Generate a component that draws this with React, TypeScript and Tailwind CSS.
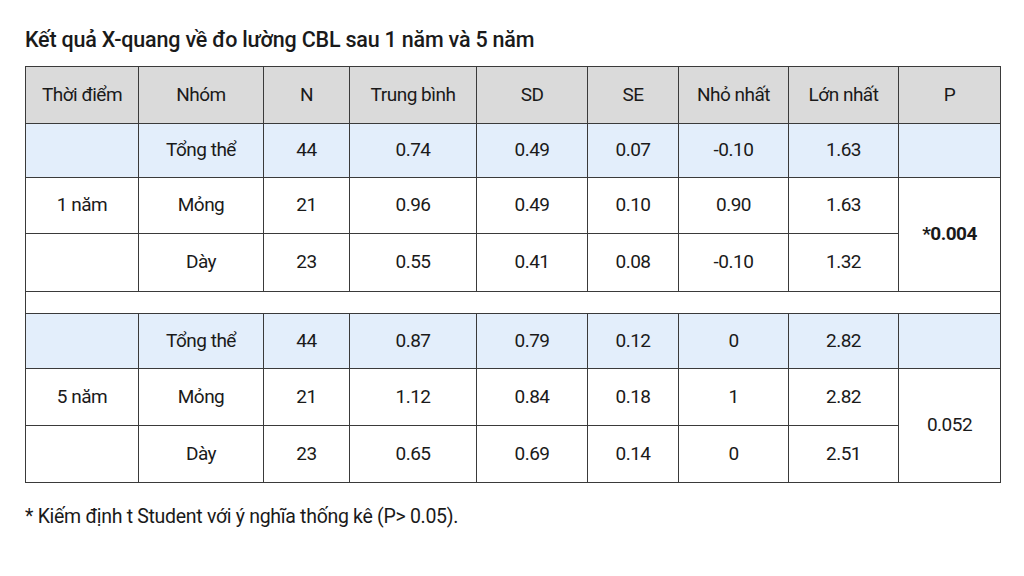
import React from "react";

const font = { fontFamily: "Roboto, 'Noto Sans', sans-serif" };

type Row = { g: string; n: string; N: string; tb: string; sd: string; se: string; min: string; max: string };

function DataRow({ r, blue, p }: { r: Row; blue?: boolean; p?: React.ReactNode }) {
  const bg = blue ? "bg-[#e3eefb]" : "bg-white";
  const td = `border border-[#3a3a3a] text-center ${bg}`;
  return (
    <>
      <td className={td}>{r.g}</td>
      <td className={td}>{r.n}</td>
      <td className={td}>{r.N}</td>
      <td className={td}>{r.tb}</td>
      <td className={td}>{r.sd}</td>
      <td className={td}>{r.se}</td>
      <td className={td}>{r.min}</td>
      <td className={td}>{r.max}</td>
      {p}
    </>
  );
}

export default function App() {
  const th = "border border-[#3a3a3a] bg-[#dadada] font-normal text-center";
  return (
    <div className="w-[1024px] h-[576px] bg-white text-[#1a1a1a] overflow-hidden" style={font}>
      <div className="pl-[25px] pt-[26px]">
        <h1 className="text-[21.5px] font-medium leading-[28px] tracking-[-0.2px]">
          Kết quả X-quang về đo lường CBL sau 1 năm và 5 năm
        </h1>
        <table className="mt-[12px] border-collapse text-[19px] tracking-[-0.5px] table-fixed w-[975px]">
          <colgroup>
            <col className="w-[113px]" />
            <col className="w-[125px]" />
            <col className="w-[86px]" />
            <col className="w-[127px]" />
            <col className="w-[111px]" />
            <col className="w-[91px]" />
            <col className="w-[110px]" />
            <col className="w-[110px]" />
            <col className="w-[102px]" />
          </colgroup>
          <thead>
            <tr className="h-[57px]">
              <th className={th}>Thời điểm</th>
              <th className={th}>Nhóm</th>
              <th className={th}>N</th>
              <th className={th}>Trung bình</th>
              <th className={th}>SD</th>
              <th className={th}>SE</th>
              <th className={th}>Nhỏ nhất</th>
              <th className={th}>Lớn nhất</th>
              <th className={th}>P</th>
            </tr>
          </thead>
          <tbody>
            <tr className="h-[54px]">
              <DataRow
                blue
                r={{ g: "", n: "Tổng thể", N: "44", tb: "0.74", sd: "0.49", se: "0.07", min: "-0.10", max: "1.63" }}
                p={<td className="border border-[#3a3a3a] bg-[#e3eefb]"></td>}
              />
            </tr>
            <tr className="h-[56px]">
              <DataRow
                r={{ g: "1 năm", n: "Mỏng", N: "21", tb: "0.96", sd: "0.49", se: "0.10", min: "0.90", max: "1.63" }}
                p={
                  <td rowSpan={2} className="border border-[#3a3a3a] bg-white text-center font-bold">
                    *0.004
                  </td>
                }
              />
            </tr>
            <tr className="h-[58px]">
              <DataRow r={{ g: "", n: "Dày", N: "23", tb: "0.55", sd: "0.41", se: "0.08", min: "-0.10", max: "1.32" }} />
            </tr>
            <tr className="h-[22px]">
              <td colSpan={9} className="border border-[#3a3a3a] bg-white"></td>
            </tr>
            <tr className="h-[55px]">
              <DataRow
                blue
                r={{ g: "", n: "Tổng thể", N: "44", tb: "0.87", sd: "0.79", se: "0.12", min: "0", max: "2.82" }}
                p={<td className="border border-[#3a3a3a] bg-[#e3eefb]"></td>}
              />
            </tr>
            <tr className="h-[57px]">
              <DataRow
                r={{ g: "5 năm", n: "Mỏng", N: "21", tb: "1.12", sd: "0.84", se: "0.18", min: "1", max: "2.82" }}
                p={
                  <td rowSpan={2} className="border border-[#3a3a3a] bg-white text-center">
                    0.052
                  </td>
                }
              />
            </tr>
            <tr className="h-[57px]">
              <DataRow r={{ g: "", n: "Dày", N: "23", tb: "0.65", sd: "0.69", se: "0.14", min: "0", max: "2.51" }} />
            </tr>
          </tbody>
        </table>
        <p className="mt-[20px] text-[19.5px] leading-[28px] tracking-[-0.3px]">
          * Kiếm định t Student với ý nghĩa thống kê (P&gt; 0.05).
        </p>
      </div>
    </div>
  );
}
